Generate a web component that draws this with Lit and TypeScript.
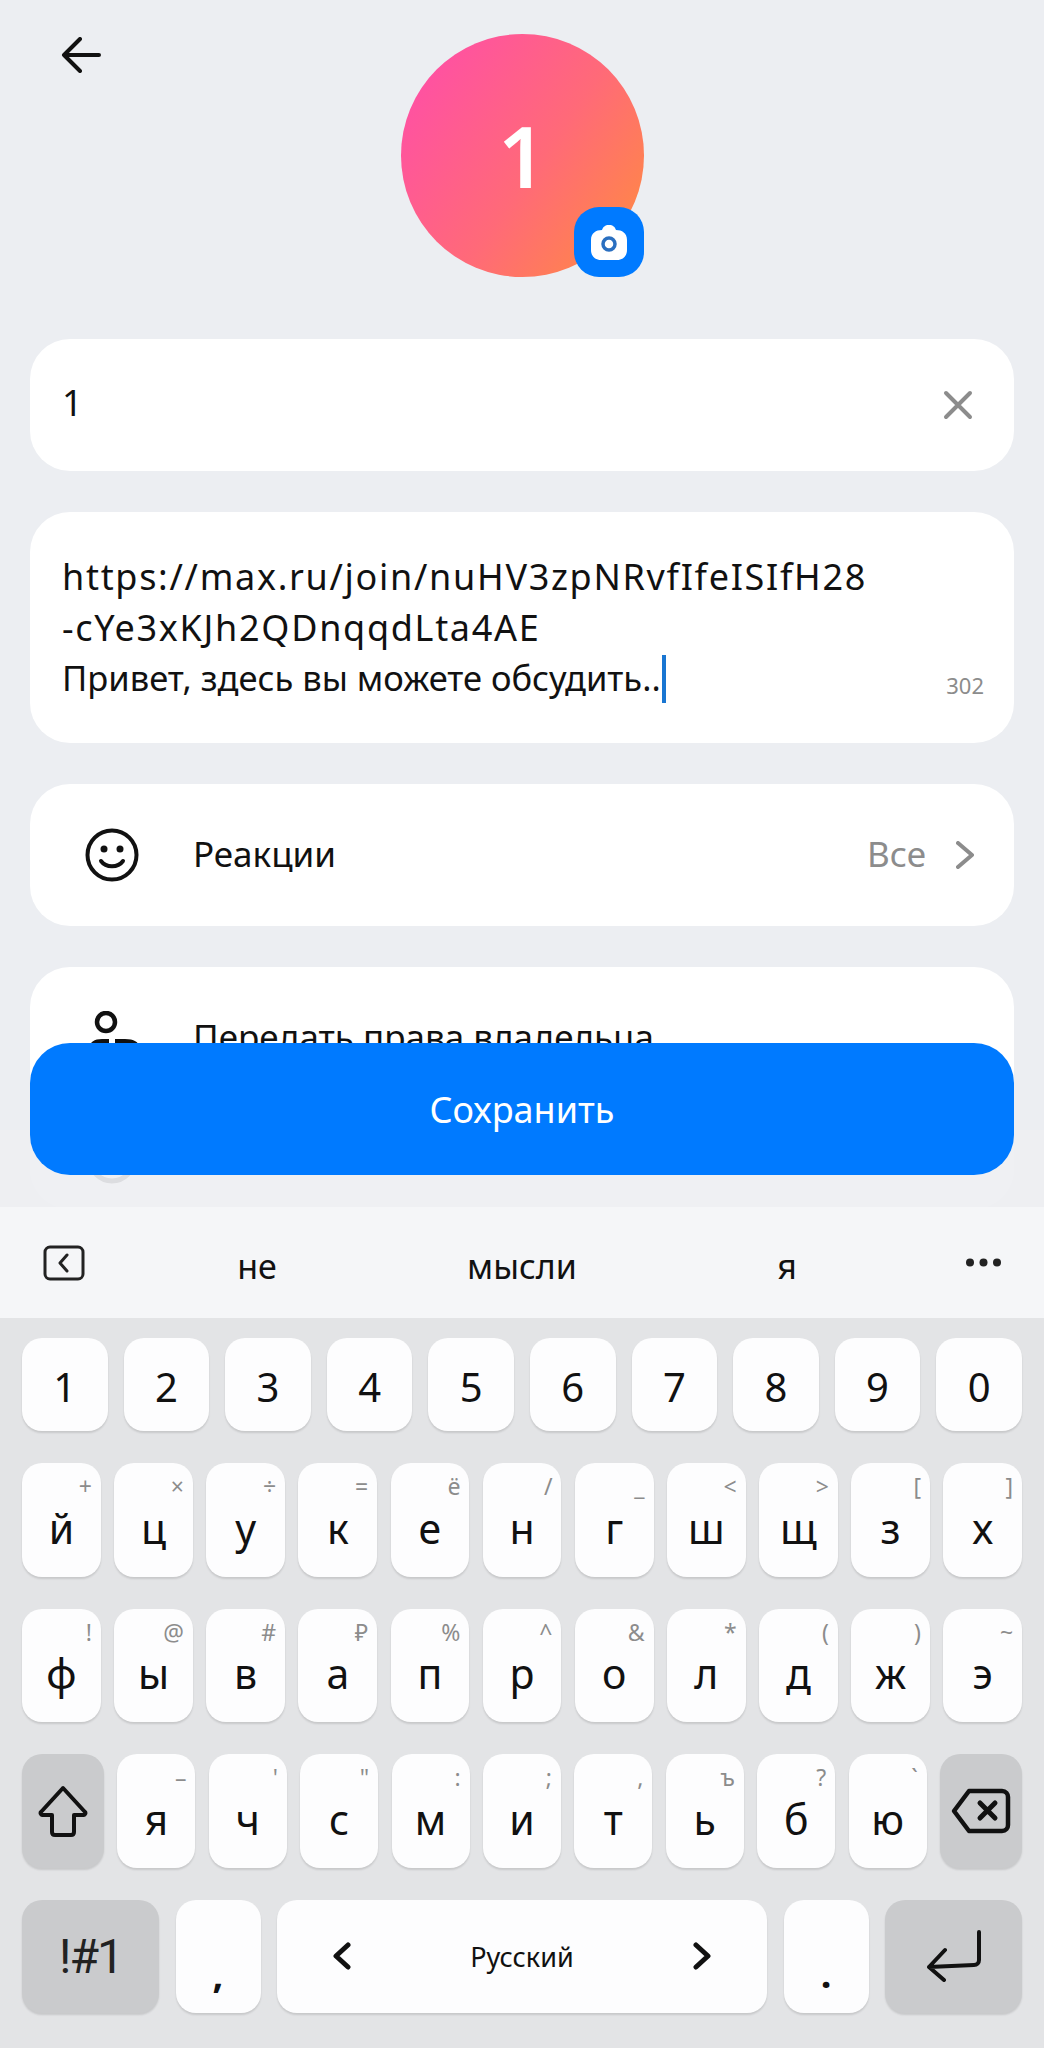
import {LitElement, html, css, svg} from 'lit';
import {customElement} from 'lit/decorators.js';

const NUMBERS = ['1', '2', '3', '4', '5', '6', '7', '8', '9', '0'];
const ROW_TOP = [
  ['й', '+'], ['ц', '×'], ['у', '÷'], ['к', '='], ['е', 'ё'], ['н', '/'],
  ['г', '_'], ['ш', '<'], ['щ', '>'], ['з', '['], ['х', ']'],
];
const ROW_MID = [
  ['ф', '!'], ['ы', '@'], ['в', '#'], ['а', '₽'], ['п', '%'], ['р', '^'],
  ['о', '&'], ['л', '*'], ['д', '('], ['ж', ')'], ['э', '~'],
];
const ROW_LOW = [
  ['я', '–'], ['ч', "'"], ['с', '"'], ['м', ':'], ['и', ';'], ['т', ','],
  ['ь', 'ъ'], ['б', '?'], ['ю', '`'],
];

const line = (d: string, w = 4) =>
  svg`<path d=${d} fill="none" stroke="currentColor" stroke-width=${w} stroke-linecap="round" stroke-linejoin="round"/>`;

@customElement('app-root')
export class AppRoot extends LitElement {
  static styles = css`
    :host {
      display: block;
      position: relative;
      width: 1044px;
      height: 2048px;
      overflow: hidden;
      background: #eceef2;
      color: #111;
      font-family: 'Noto Sans', sans-serif;
    }

    svg {
      display: block;
    }

    .content {
      height: 1207px;
      box-sizing: border-box;
      padding: 34px 30px 0;
      overflow: hidden;
      display: flex;
      flex-direction: column;
      gap: 41px;
    }

    .header {
      display: grid;
      grid-template-columns: 1fr 243px 1fr;
      margin-bottom: 21px;
    }

    .back {
      width: 40px;
      height: 36px;
      margin: 3px 0 0 31px;
    }

    .avatar {
      position: relative;
      width: 243px;
      height: 243px;
      border-radius: 50%;
      background: linear-gradient(125deg, #ff4fa6 8%, #ff6a78 55%, #ff8a42 95%);
      color: #fff;
      display: flex;
      align-items: center;
      justify-content: center;
      font-size: 84px;
      font-weight: 600;
    }

    .badge {
      position: absolute;
      right: 0;
      bottom: 0;
      width: 70px;
      height: 70px;
      border-radius: 25px;
      background: #007aff;
      display: flex;
      align-items: center;
      justify-content: center;
    }

    .card {
      background: #fff;
      border-radius: 40px;
      flex: none;
    }

    .name {
      height: 132px;
      display: flex;
      align-items: center;
      justify-content: space-between;
      padding: 0 41px 0 32px;
      font-size: 36px;
      box-sizing: border-box;
    }

    .name span {
      margin-bottom: 6px;
    }

    .close {
      color: #8c8c8c;
    }

    .about {
      position: relative;
      height: 231px;
      box-sizing: border-box;
      padding: 40px 32px 0;
      font-size: 34.5px;
      line-height: 50.5px;
      white-space: pre;
    }

    .about .link {
      display: block;
      font-size: 36px;
      letter-spacing: 1.7px;
    }

    .caret {
      display: inline-block;
      width: 4px;
      height: 48px;
      margin-left: 1px;
      background: #1976d2;
      vertical-align: -12px;
    }

    .count {
      position: absolute;
      right: 30px;
      top: 148px;
      font-size: 22px;
      color: #8c8c8c;
    }

    .row {
      height: 142px;
      display: flex;
      align-items: center;
      padding: 0 40px 0 55px;
      font-size: 35px;
      box-sizing: border-box;
    }

    .row.hidden {
      height: 100px;
    }

    .row .icon {
      width: 54px;
      margin-right: 54px;
      flex: none;
    }

    .row .label {
      flex: 1;
      margin-bottom: 4px;
    }

    .row .value {
      color: #8c8c8c;
      margin: 0 30px 4px 0;
    }

    .row .chevron {
      color: #8c8c8c;
    }

    .scrim {
      position: absolute;
      left: 0;
      right: 0;
      top: 1130px;
      height: 77px;
      background: rgba(238, 239, 242, 0.92);
    }

    .save {
      position: absolute;
      left: 30px;
      right: 30px;
      top: 1043px;
      height: 132px;
      border-radius: 40px;
      background: #007aff;
      color: #fff;
      font-size: 36px;
      display: flex;
      align-items: center;
      justify-content: center;
    }

    .suggestions {
      height: 111px;
      background: #f5f6f8;
      display: grid;
      grid-template-columns: 124.5px repeat(3, 1fr) 124.5px;
      align-items: center;
      font-size: 34px;
      text-align: center;
    }

    .suggestions span {
      padding-top: 6px;
    }

    .suggestions .toggle {
      margin-left: 43px;
    }

    .suggestions .more {
      justify-self: end;
      margin-right: 42px;
    }

    .keyboard {
      height: 730px;
      box-sizing: border-box;
      padding: 20px 22px 0;
      background: #e3e4e6;
      display: flex;
      flex-direction: column;
      gap: 32px;
    }

    .keys {
      display: flex;
      height: 113.5px;
      gap: 13.3px;
    }

    .keys.numbers {
      height: 93px;
      gap: 16px;
    }

    .keys.bottom {
      display: grid;
      grid-template-columns: 137px 85px 1fr 85px 137px;
      gap: 16.5px;
    }

    .key {
      position: relative;
      flex: 1;
      min-width: 0;
      border-radius: 20px;
      background: #fdfdfe;
      box-shadow: 0 2px 2px rgba(0, 0, 0, 0.12);
      display: flex;
      align-items: center;
      justify-content: center;
      font-size: 41px;
      padding-top: 16px;
      box-sizing: border-box;
    }

    .numbers .key {
      padding-top: 4px;
      font-size: 40px;
    }

    .key.special {
      flex: none;
      width: 82px;
      padding: 0;
      background: #cacbcd;
    }

    .bottom .key {
      padding: 0;
    }

    .bottom .key.special {
      width: auto;
    }

    .key.special.symbols {
      font-family: Roboto, sans-serif;
      font-size: 48px;
      letter-spacing: -2px;
      color: #222;
    }

    .hint {
      position: absolute;
      top: 8px;
      right: 9px;
      font-size: 23px;
      line-height: 30px;
      color: #8c8c8c;
    }

    .bottom .punct {
      align-items: flex-end;
      padding-bottom: 14px;
      font-size: 38px;
      font-weight: 700;
    }

    .bottom .space {
      justify-content: space-between;
      padding: 0 56px;
      font-size: 27px;
    }
  `;

  private letterKey([label, hint]: string[]) {
    return html`<div class="key">${label}<span class="hint">${hint}</span></div>`;
  }

  render() {
    return html`
      <div class="content">
        <div class="header">
          <svg class="back" viewBox="0 0 40 36">
            ${line('M38 18H3M19 2 3 18l16 16')}
          </svg>
          <div class="avatar">
            1
            <div class="badge">
              <svg width="36" height="35" viewBox="0 0 36 35">
                <path d="M11 5c1-3 3-5 7-5s6 2 7 5c6 0 11 3 11 10v10c0 6-4 10-10 10H10C4 35 0 31 0 25V15C0 8 5 5 11 5z" fill="#fff"/>
                <circle cx="18" cy="19" r="6" fill="#fff" stroke="#2a6fc0" stroke-width="3.5"/>
              </svg>
            </div>
          </div>
        </div>

        <div class="card name">
          <span>1</span>
          <svg class="close" width="30" height="30" viewBox="0 0 30 30">
            ${line('M3 3l24 24M27 3 3 27')}
          </svg>
        </div>

        <div class="card about"><span class="link">https://max.ru/join/nuHV3zpNRvfIfeISIfH28</span><span class="link">-cYe3xKJh2QDnqqdLta4AE</span>Привет, здесь вы можете обсудить..<span class="caret"></span><span class="count">302</span></div>

        <div class="card row">
          <svg class="icon" height="54" viewBox="0 0 54 54">
            <circle cx="27" cy="27" r="24.5" fill="none" stroke="currentColor" stroke-width="4"/>
            <circle cx="19" cy="21" r="3.5" fill="currentColor"/>
            <circle cx="35" cy="21" r="3.5" fill="currentColor"/>
            ${line('M16 33c5 7 17 7 22 0')}
          </svg>
          <span class="label">Реакции</span>
          <span class="value">Все</span>
          <svg class="chevron" width="18" height="28" viewBox="0 0 18 28">
            ${line('M2 2l14 12L2 26')}
          </svg>
        </div>

        <div class="card">
          <div class="row">
            <svg class="icon" height="54" viewBox="0 0 54 54">
              <circle cx="21" cy="11" r="9" fill="none" stroke="currentColor" stroke-width="4.5"/>
              <path d="M5 52V36c0-5 4-8 12-8h7v24zM30 28h10c9 0 14 3 14 8v16H30z" fill="currentColor"/>
            </svg>
            <span class="label">Передать права владельца</span>
          </div>
          <div class="row hidden">
            <svg class="icon" height="54" viewBox="0 0 54 54">
              <circle cx="27" cy="27" r="22" fill="none" stroke="currentColor" stroke-width="5"/>
            </svg>
          </div>
        </div>
      </div>
      <div class="scrim"></div>
      <div class="save">Сохранить</div>

      <div class="suggestions">
        <svg class="toggle" width="42" height="36" viewBox="0 0 42 36">
          <rect x="2" y="2" width="38" height="32" rx="5" fill="none" stroke="#222" stroke-width="3"/>
          <path d="M24 10l-7 8 7 8" fill="none" stroke="#222" stroke-width="3" stroke-linecap="round" stroke-linejoin="round"/>
        </svg>
        <span>не</span>
        <span>мысли</span>
        <span>я</span>
        <svg class="more" width="37" height="9" viewBox="0 0 37 9">
          <circle cx="5" cy="4.5" r="4" fill="#222"/>
          <circle cx="18.5" cy="4.5" r="4" fill="#222"/>
          <circle cx="32" cy="4.5" r="4" fill="#222"/>
        </svg>
      </div>

      <div class="keyboard">
        <div class="keys numbers">
          ${NUMBERS.map(n => html`<div class="key">${n}</div>`)}
        </div>
        <div class="keys">${ROW_TOP.map(k => this.letterKey(k))}</div>
        <div class="keys">${ROW_MID.map(k => this.letterKey(k))}</div>
        <div class="keys">
          <div class="key special">
            <svg width="50" height="52" viewBox="0 0 50 52">
              ${line('M25 3 3 27c-1 1 0 3 1 3h10v17c0 2 1 3 3 3h16c2 0 3-1 3-3V30h10c1 0 2-2 1-3z')}
            </svg>
          </div>
          ${ROW_LOW.map(k => this.letterKey(k))}
          <div class="key special">
            <svg width="60" height="46" viewBox="0 0 60 46">
              ${line('M18 3h33c4 0 6 3 6 6v28c0 3-2 6-6 6H18L3 23z', 4.5)}
              ${line('M29 15l15 15M44 15 29 30', 5)}
            </svg>
          </div>
        </div>
        <div class="keys bottom">
          <div class="key special symbols">!#1</div>
          <div class="key punct">,</div>
          <div class="key space">
            <svg width="18" height="28" viewBox="0 0 18 28">${line('M15 3 3 14l12 11', 5)}</svg>
            <span>Русский</span>
            <svg width="18" height="28" viewBox="0 0 18 28">${line('M3 3l12 11L3 25', 5)}</svg>
          </div>
          <div class="key punct">.</div>
          <div class="key special">
            <svg width="58" height="52" viewBox="0 0 58 52">
              ${line('M54 2v28c0 3-2 5-5 5L4 37M20 20 4 37l15 13')}
            </svg>
          </div>
        </div>
      </div>
    `;
  }
}
